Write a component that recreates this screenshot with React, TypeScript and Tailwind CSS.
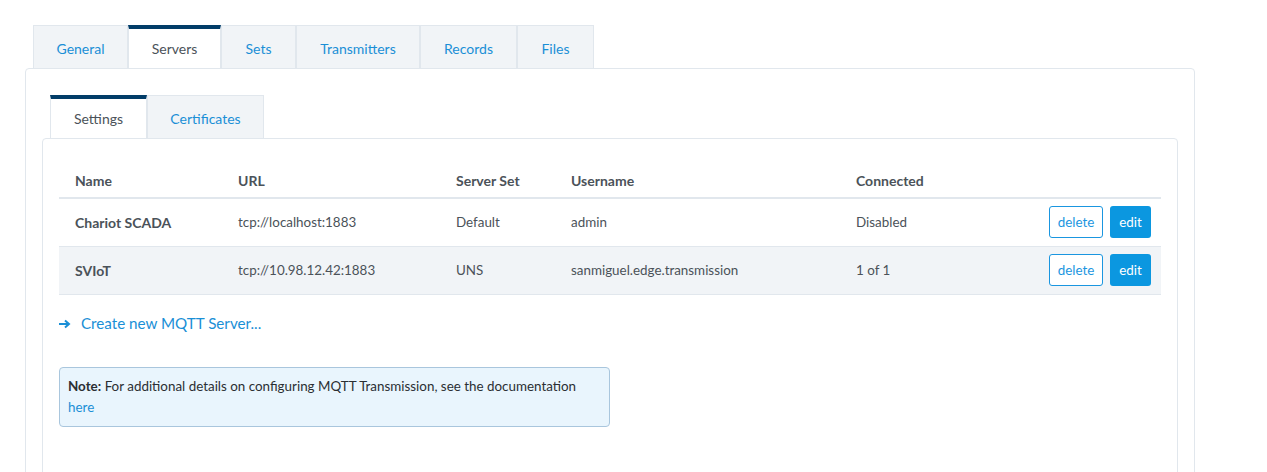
import React from 'react';

const outerTabs = ['General', 'Servers', 'Sets', 'Transmitters', 'Records', 'Files'];
const innerTabs = ['Settings', 'Certificates'];

const servers = [
  { name: 'Chariot SCADA', url: 'tcp://localhost:1883', set: 'Default', user: 'admin', connected: 'Disabled' },
  { name: 'SVIoT', url: 'tcp://10.98.12.42:1883', set: 'UNS', user: 'sanmiguel.edge.transmission', connected: '1 of 1' },
];

const Tab: React.FC<{ label: string; active: boolean; className: string }> = ({ label, active, className }) => (
  <div
    className={
      active
        ? `flex items-center justify-center h-full bg-white text-[#4b5259] border-t-4 border-t-[#023d68] border-x border-x-[#e1e7ed] -mb-px pb-px ${className}`
        : `flex items-center justify-center h-full bg-[#f1f4f7] text-[#1a8fd6] border border-[#e1e7ed] border-b-0 pt-[2px] ${className}`
    }
  >
    {label}
  </div>
);

export default function App() {
  return (
    <div className="w-[1267px] h-[472px] overflow-hidden bg-white font-['Lato',sans-serif] text-[14px] text-[#4b5259]">
      <div className="pt-[25px] pl-[25px] w-[1195px]">
        {/* outer tabs */}
        <div className="flex h-[43px] pl-[8px] relative z-10">
          {outerTabs.map((t, i) => (
            <Tab
              key={t}
              label={t}
              active={i === 1}
              className={['w-[95px]', 'w-[93px]', 'w-[75px]', 'w-[124px]', 'w-[97px]', 'w-[77px]'][i]}
            />
          ))}
        </div>

        {/* outer panel */}
        <div className="border border-[#e1e7ed] rounded-[4px] h-[420px] pt-[26px] px-[16px]">
          {/* inner tabs */}
          <div className="flex h-[43px] pl-[8px] relative z-10">
            {innerTabs.map((t, i) => (
              <Tab key={t} label={t} active={i === 0} className={i === 0 ? 'w-[97px]' : 'w-[117px]'} />
            ))}
          </div>

          <div className="border border-[#e1e7ed] rounded-[4px] h-[360px] pt-[25px] px-[16px]">
            <table className="w-full border-collapse">
              <thead>
                <tr className="border-b-2 border-[#e1e7ed] text-left text-[#4b5259]">
                  <th className="h-[34px] pl-[16px] w-[179px] font-bold">Name</th>
                  <th className="w-[218px] font-bold">URL</th>
                  <th className="w-[115px] font-bold">Server Set</th>
                  <th className="w-[285px] font-bold">Username</th>
                  <th className="font-bold">Connected</th>
                  <th></th>
                </tr>
              </thead>
              <tbody className="text-[13.4px]">
                {servers.map((s, i) => (
                  <tr key={s.name} className={`h-[48px] border-b border-[#e1e7ed] ${i === 1 ? 'bg-[#f1f4f7]' : ''}`}>
                    <td className="pl-[16px] font-bold text-[14px]">{s.name}</td>
                    <td>{s.url}</td>
                    <td>{s.set}</td>
                    <td>{s.user}</td>
                    <td>{s.connected}</td>
                    <td className="pr-[10px]">
                      <div className="flex justify-end gap-[7px]">
                        <button className="h-[32px] w-[54px] rounded-[3px] border border-[#1a96e0] bg-white text-[#1a96e0]">delete</button>
                        <button className="h-[32px] w-[41px] rounded-[3px] bg-[#0b97e0] text-white">edit</button>
                      </div>
                    </td>
                  </tr>
                ))}
              </tbody>
            </table>

            <div className="flex items-center mt-[19px] h-[20px] text-[#1a8fd6] text-[15.2px]">
              <svg width="12" height="10" viewBox="0 0 12 10" className="mr-[10px]">
                <path d="M0 5h9M6 1.5 10 5 6 8.5" stroke="#1a8fd6" strokeWidth="2" fill="none" />
              </svg>
              <span>Create new MQTT Server...</span>
            </div>

            <div className="mt-[33px] w-[551px] h-[60px] rounded-[4px] border border-[#a9c6dd] bg-[#e9f5fd] px-[8px] pt-[8px] text-[13.4px] leading-[21px] text-[#2b2f33]">
              <b>Note:</b> For additional details on configuring MQTT Transmission, see the documentation
              <br />
              <span className="text-[#1a8fd6]">here</span>
            </div>
          </div>
        </div>
      </div>
    </div>
  );
}
